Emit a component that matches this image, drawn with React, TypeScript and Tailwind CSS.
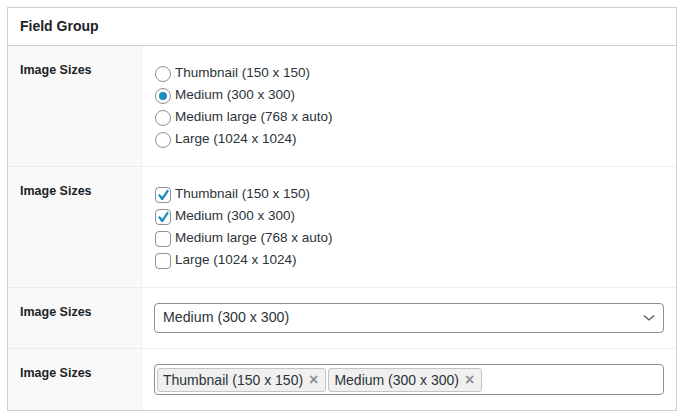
const sizes = [
  "Thumbnail (150 x 150)",
  "Medium (300 x 300)",
  "Medium large (768 x auto)",
  "Large (1024 x 1024)",
];

function Radio({ checked }: { checked: boolean }) {
  return (
    <span className="w-4 h-4 shrink-0 rounded-full border border-[#8c8f94] bg-white flex items-center justify-center">
      {checked && <span className="w-2 h-2 rounded-full bg-[#1e8cbe]"></span>}
    </span>
  );
}

function Checkbox({ checked }: { checked: boolean }) {
  return (
    <span className="relative w-4 h-4 shrink-0 rounded-[4px] border border-[#8c8f94] bg-white">
      {checked && (
        <svg className="absolute top-[-3px] left-[-4px] w-[21px] h-[21px]" viewBox="0 0 20 20">
          <path d="M14.83 4.89l1.34.94-5.81 8.38H9.02L5.78 9.67l1.34-1.12 2.74 2.65 4.97-7.31z" fill="#1e8cbe" />
        </svg>
      )}
    </span>
  );
}

function Row({ first, children }: { first?: boolean; children: React.ReactNode }) {
  return (
    <div className={`flex ${first ? "" : "border-t border-[#eeeeee]"}`}>
      <div className="w-[134px] shrink-0 bg-[#f9f9f9] border-r border-[#eeeeee] px-[12px] pt-[15px] text-[12.5px] leading-[18px] font-bold text-[#1d2327]">
        Image Sizes
      </div>
      <div className="flex-1 px-[12px]">{children}</div>
    </div>
  );
}

export default function App() {
  const chosen = ["Thumbnail (150 x 150)", "Medium (300 x 300)"];

  return (
    <div className="min-h-screen bg-white p-[7px] font-['Liberation_Sans',Arial,sans-serif] text-[#2c3338]">
      <div className="w-[670px] border border-[#ccd0d4] bg-white">
        <div className="h-[38px] border-b border-[#ccd0d4] px-[12px] flex items-center text-[14px] font-bold text-[#1d2327]">
          Field Group
        </div>

        <Row first>
          <ul className="py-[16px] pl-[1px]">
            {sizes.map((s, i) => (
              <li key={s} className="h-[22px] flex items-center gap-[4px] text-[13.5px] pt-[1px]">
                <Radio checked={i === 1} />
                {s}
              </li>
            ))}
          </ul>
        </Row>

        <Row>
          <ul className="py-[16px] pl-[1px]">
            {sizes.map((s, i) => (
              <li key={s} className="h-[22px] flex items-center gap-[4px] text-[13.5px] pt-[1px]">
                <Checkbox checked={i < 2} />
                {s}
              </li>
            ))}
          </ul>
        </Row>

        <Row>
          <div className="py-[15px]">
            <div className="h-[30px] border border-[#8c8f94] rounded-[4px] bg-white pl-[8px] pr-[8px] flex items-center justify-between text-[14.2px]">
              <span>Medium (300 x 300)</span>
              <svg width="12" height="8" viewBox="0 0 12 8" fill="none">
                <path d="M1 1.5l5 4.5 5-4.5" stroke="#50575e" strokeWidth="1.3" />
              </svg>
            </div>
          </div>
        </Row>

        <Row>
          <div className="py-[15px]">
            <div className="h-[31px] border border-[#8c8f94] rounded-[4px] bg-white pt-[3px] pl-[2px] flex items-start gap-[2px]">
              {chosen.map((c) => (
                <span
                  key={c}
                  className="h-[24px] border border-[#c3c4c7] bg-[#f0f0f1] rounded-[3px] pl-[5px] pr-[7px] flex items-center gap-[6px] text-[14px]"
                >
                  {c}
                  <span className="text-[#8c8f94] font-bold text-[16px] leading-none">×</span>
                </span>
              ))}
            </div>
          </div>
        </Row>
      </div>
    </div>
  );
}
